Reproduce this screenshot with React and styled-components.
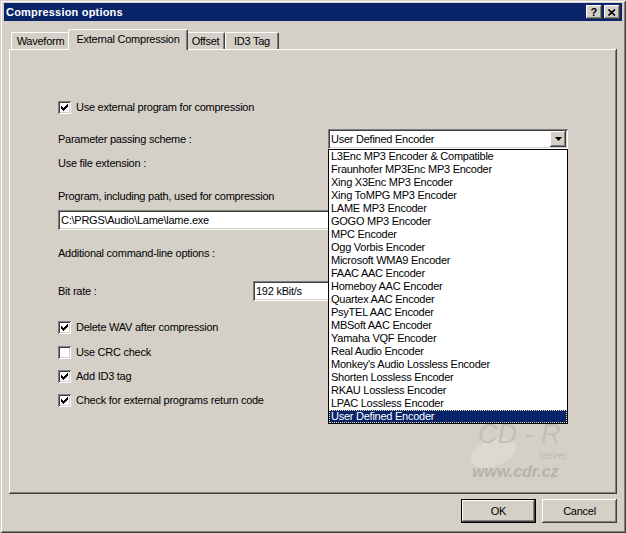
import React from 'react';
import styled, { createGlobalStyle } from 'styled-components';

const Global = createGlobalStyle`
  body {
    margin: 0;
    background: #D4D0C8;
  }
`;

const raised = `
  box-shadow: inset -1px -1px #404040, inset 1px 1px #fff, inset -2px -2px #808080;
`;

const sunken = `
  box-shadow: inset 1px 1px #808080, inset -1px -1px #fff, inset 2px 2px #404040, inset -2px -2px #D4D0C8;
`;

const Window = styled.div`
  width: 626px;
  height: 533px;
  box-sizing: border-box;
  padding: 3px 4px 0;
  background: #D4D0C8;
  box-shadow: inset 1px 1px #D4D0C8, inset -1px -1px #404040, inset 2px 2px #fff, inset -2px -2px #808080;
  display: flex;
  flex-direction: column;
  font: 11px "Liberation Sans", Arial, sans-serif;
  letter-spacing: -0.25px;
  color: #000;
`;

const TitleBar = styled.div`
  height: 18px;
  background: #0A246A;
  display: flex;
  align-items: center;
  padding: 0 2px;
  color: #fff;
  font-weight: bold;
  letter-spacing: 0.2px;
`;

const TitleText = styled.div`
  flex: 1;
`;

const TitleButton = styled.div`
  width: 16px;
  height: 14px;
  margin-left: 2px;
  background: #D4D0C8;
  ${raised}
  display: flex;
  align-items: center;
  justify-content: center;
  color: #000;
  font-weight: bold;
  font-size: 11px;
  line-height: 14px;
`;

const Body = styled.div`
  display: flex;
  flex-direction: column;
  padding: 8px 5px 0;
`;

const TabStrip = styled.div`
  height: 20px;
  display: flex;
  align-items: flex-end;
  padding-left: 2px;
  position: relative;
  z-index: 2;
`;

const Tab = styled.div`
  box-sizing: border-box;
  width: ${p => p.$w}px;
  height: ${p => (p.$active ? 21 : 17)}px;
  margin: ${p => (p.$active ? '0 -2px -1px' : '0')};
  background: #D4D0C8;
  border-top: 1px solid #fff;
  border-left: 1px solid #fff;
  border-right: 1px solid #404040;
  border-radius: 2px 2px 0 0;
  box-shadow: inset -1px 0 #808080;
  display: flex;
  align-items: center;
  justify-content: center;
  padding-bottom: ${p => (p.$active ? 3 : 0)}px;
  white-space: nowrap;
  position: relative;
  z-index: ${p => (p.$active ? 2 : 1)};
`;

const Panel = styled.div`
  height: 445px;
  box-sizing: border-box;
  padding: 48px 0 0 49px;
  ${raised}
  position: relative;
  display: flex;
  flex-direction: column;
`;

const Row = styled.div`
  display: flex;
  align-items: center;
  height: 20px;
  margin-top: ${p => p.$gap || 0}px;
  white-space: nowrap;
`;

const Label = styled.div`
  width: ${p => (p.$w ? `${p.$w}px` : 'auto')};
  flex-shrink: 0;
`;

const CheckBox = styled.div`
  width: 13px;
  height: 13px;
  box-sizing: border-box;
  background: #fff;
  ${sunken}
  margin-right: 5px;
  flex-shrink: 0;
  svg {
    display: block;
  }
`;

const TextInput = styled.div`
  width: ${p => p.$w}px;
  height: 20px;
  box-sizing: border-box;
  background: #fff;
  ${sunken}
  padding-left: 3px;
  display: flex;
  align-items: center;
  flex-shrink: 0;
`;

const Combo = styled.div`
  position: relative;
  width: 240px;
  height: 20px;
  box-sizing: border-box;
  background: #fff;
  ${sunken}
  padding: 2px 2px 2px 3px;
  display: flex;
  align-items: center;
  z-index: 5;
`;

const ComboText = styled.div`
  flex: 1;
`;

const ArrowButton = styled.div`
  width: 16px;
  height: 16px;
  background: #D4D0C8;
  ${raised}
  display: flex;
  align-items: center;
  justify-content: center;
`;

const DropList = styled.div`
  position: absolute;
  top: 20px;
  left: 0;
  width: 240px;
  box-sizing: border-box;
  border: 1px solid #000;
  background: #fff;
  display: flex;
  flex-direction: column;
`;

const ListItem = styled.div`
  height: 13px;
  line-height: 13px;
  padding: 0 2px;
  background: ${p => (p.$sel ? '#0A246A' : '#fff')};
  color: ${p => (p.$sel ? '#fff' : '#000')};
  outline: ${p => (p.$sel ? '1px dotted #E8E4A0' : 'none')};
  outline-offset: -1px;
`;

const Watermark = styled.svg`
  position: absolute;
  left: 460px;
  top: 366px;
  letter-spacing: 0;
`;

const ButtonRow = styled.div`
  display: flex;
  justify-content: flex-end;
  gap: 6px;
  margin-top: 5px;
`;

const Button = styled.div`
  width: 75px;
  height: 24px;
  box-sizing: border-box;
  background: #D4D0C8;
  border: ${p => (p.$default ? '1px solid #000' : '0')};
  ${raised}
  display: flex;
  align-items: center;
  justify-content: center;
`;

const CheckMark = () => (
  <svg width="9" height="9" viewBox="0 0 9 9" style={{ margin: 2 }}>
    <path
      fill="#000"
      d="M6 0h1v1h-1z M5 1h2v1h-2z M0 2h1v1h-1z M4 2h3v1h-3z M0 3h2v1h-2z M3 3h3v1h-3z M0 4h5v1h-5z M1 5h3v1h-3z M2 6h1v1h-1z"
      transform="translate(1 1)"
    />
  </svg>
);

const Check = ({ checked, children, gap }) => (
  <Row $gap={gap}>
    <CheckBox>{checked && <CheckMark />}</CheckBox>
    <Label>{children}</Label>
  </Row>
);

const encoders = [
  'L3Enc MP3 Encoder & Compatible',
  'Fraunhofer MP3Enc MP3 Encoder',
  'Xing X3Enc MP3 Encoder',
  'Xing ToMPG MP3 Encoder',
  'LAME MP3 Encoder',
  'GOGO MP3 Encoder',
  'MPC Encoder',
  'Ogg Vorbis Encoder',
  'Microsoft WMA9 Encoder',
  'FAAC AAC Encoder',
  'Homeboy AAC Encoder',
  'Quartex AAC Encoder',
  'PsyTEL AAC Encoder',
  'MBSoft AAC Encoder',
  'Yamaha VQF Encoder',
  'Real Audio Encoder',
  "Monkey's Audio Lossless Encoder",
  'Shorten Lossless Encoder',
  'RKAU Lossless Encoder',
  'LPAC Lossless Encoder',
  'User Defined Encoder',
];

export default function App() {
  return (
    <>
      <Global />
      <Window>
        <TitleBar>
          <TitleText>Compression options</TitleText>
          <TitleButton>?</TitleButton>
          <TitleButton>
            <svg width="8" height="7" viewBox="0 0 8 7">
              <path d="M0.5 0.5 L7 6.5 M7 0.5 L0.5 6.5" stroke="#000" strokeWidth="1.6" />
            </svg>
          </TitleButton>
        </TitleBar>
        <Body>
          <TabStrip>
            <Tab $w={59}>Waveform</Tab>
            <Tab $w={120} $active>External Compression</Tab>
            <Tab $w={39}>Offset</Tab>
            <Tab $w={54}>ID3 Tag</Tab>
          </TabStrip>
          <Panel>
            <Check checked>Use external program for compression</Check>
            <Row $gap={12}>
              <Label $w={270}>Parameter passing scheme :</Label>
              <Combo>
                <ComboText>User Defined Encoder</ComboText>
                <ArrowButton>
                  <svg width="7" height="4" viewBox="0 0 7 4">
                    <path d="M0 0h7l-3.5 4z" fill="#000" />
                  </svg>
                </ArrowButton>
                <DropList>
                  {encoders.map((name, i) => (
                    <ListItem key={name} $sel={i === encoders.length - 1}>{name}</ListItem>
                  ))}
                </DropList>
              </Combo>
            </Row>
            <Row $gap={4}>
              <Label>Use file extension :</Label>
            </Row>
            <Row $gap={13}>
              <Label>Program, including path, used for compression</Label>
            </Row>
            <Row $gap={4}>
              <TextInput $w={480}>C:\PRGS\Audio\Lame\lame.exe</TextInput>
            </Row>
            <Row $gap={13}>
              <Label>Additional command-line options :</Label>
            </Row>
            <Row $gap={18}>
              <Label $w={195}>Bit rate :</Label>
              <TextInput $w={110}>192 kBit/s</TextInput>
            </Row>
            <Check checked gap={16}>Delete WAV after compression</Check>
            <Check gap={5}>Use CRC check</Check>
            <Check checked gap={4}>Add ID3 tag</Check>
            <Check checked gap={4}>Check for external programs return code</Check>
            <Watermark width="120" height="74" viewBox="0 0 120 74">
              <ellipse cx="24" cy="38" rx="24" ry="13" fill="#DCD9D2" transform="rotate(-20 24 38)" />
              <text x="9" y="28" fontSize="27" fontStyle="italic" fill="#C3BFB7" fontFamily="Liberation Sans, Arial, sans-serif">CD - R</text>
              <text x="70" y="44" fontSize="10" fontStyle="italic" fill="#BEBAB2" fontFamily="Liberation Sans, Arial, sans-serif">server</text>
              <text x="3" y="62" fontSize="16" fontStyle="italic" fontWeight="bold" fill="#B7B3AB" fontFamily="Liberation Sans, Arial, sans-serif">www.cdr.cz</text>
            </Watermark>
          </Panel>
          <ButtonRow>
            <Button $default>OK</Button>
            <Button>Cancel</Button>
          </ButtonRow>
        </Body>
      </Window>
    </>
  );
}
